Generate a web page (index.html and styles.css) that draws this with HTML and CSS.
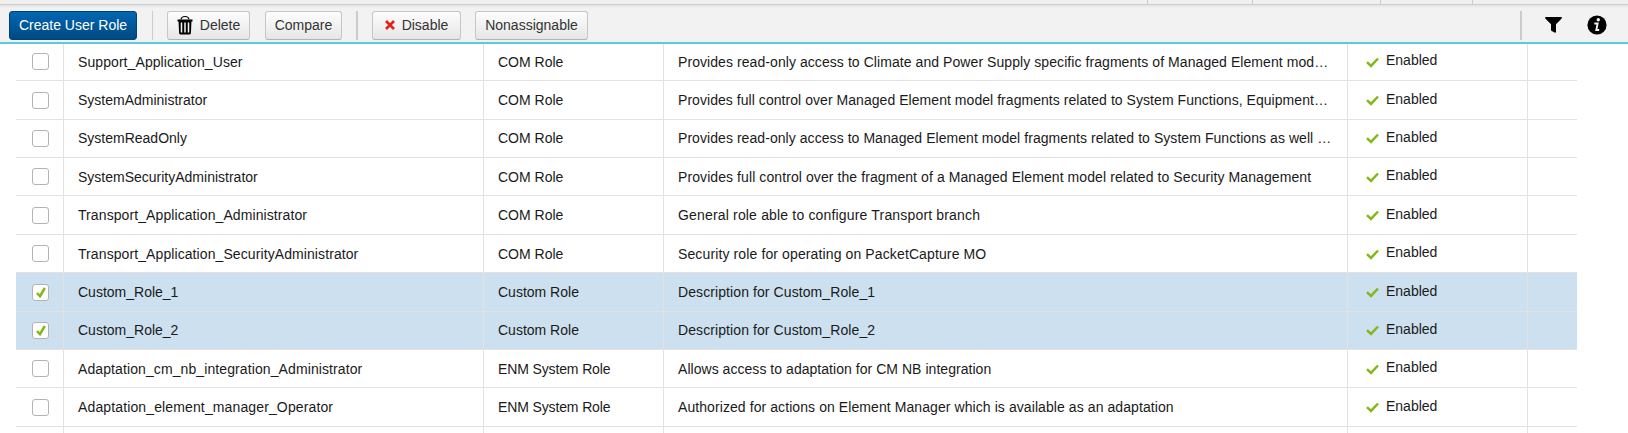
FILE: index.html
```html
<!DOCTYPE html>
<html lang="en">
<head>
<meta charset="utf-8">
<title>Role Management</title>
<link rel="stylesheet" href="styles.css">
</head>
<body>
<svg class="defs" width="0" height="0">
  <symbol id="tick" viewBox="0 0 13 11"><path d="M1 5.200 5 8.900 12 1.500" fill="none" stroke="#83b81a" stroke-width="2.500"/></symbol>
</svg>
<div class="strip"><i class="s1"></i><i class="s2"></i><i class="s3"></i><i class="s4"></i></div>
<header class="bar">
  <button class="btn primary">Create User Role</button>
  <span class="sep thin"></span>
  <button class="btn delete"><svg width="16" height="20" viewBox="0 0 16 20"><path d="M4 4.500C4.500 .5 11.500 .5 12 4.500" fill="none" stroke="#000" stroke-width="1.200"/><path d="M.5 4.500h15v2H.5z"/><path d="M1.500 6h13l-.6 12q-.1 1.500-1.600 1.500H3.700q-1.500 0-1.600-1.500z"/><path d="M4.500 7.500v10M8 7.500v10M11.500 7.500v10" stroke="#f5f5f5" stroke-width="1.500"/></svg>Delete</button>
  <button class="btn compare">Compare</button>
  <span class="sep"></span>
  <button class="btn disable"><svg width="10" height="10" viewBox="0 0 10 10"><path d="M1 1l8 8M9 1 1 9" stroke="#e32119" stroke-width="2.600"/></svg>Disable</button>
  <button class="btn nonassign">Nonassignable</button>
  <span class="tools">
    <span class="sep"></span>
    <svg class="filter" width="17" height="16" viewBox="0 0 17 16"><path d="M.3 0h16.400v1.500L11 7.300v8.200H9.300L6 13.500V7.300L.3 1.500z"/></svg>
    <svg class="info" width="20" height="20" viewBox="0 0 20 20"><circle cx="10" cy="10" r="9.600"/><circle cx="11.300" cy="4.700" r="1.700" fill="#f2f2f2"/><path d="M7.300 8.500h3.300L9.300 15h2.900" fill="none" stroke="#f2f2f2" stroke-width="1.900"/></svg>
  </span>
</header>
<main class="view">
  <div class="table" id="roles"></div>
</main>
<script src="roles.js"></script>
</body>
</html>
```
FILE: styles.css
```css
* { box-sizing: border-box; }
body { margin: 0; height: 433px; overflow: hidden; display: flex; flex-direction: column; background: #fff; color: #1a1a1a; font: 14px/18px "Liberation Sans", Arial, sans-serif; }
.defs { position: absolute; }
.strip { height: 5px; flex: none; display: flex; background: #f0f0f0; border-bottom: 1px solid #ccc; }
.strip i { border-right: 1px solid #ccc; }
.s1 { width: 1148px; }
.s2 { width: 105px; }
.s3 { width: 128px; }
.s4 { width: 92px; }
.bar { height: 39px; flex: none; display: flex; align-items: flex-start; padding: 6px 0 0 9px; background: linear-gradient(#e2e2e2, #f2f2f2 3px); border-bottom: 2px solid #5fc8e1; }
.btn { height: 29px; display: flex; align-items: center; justify-content: center; padding: 0 0 1px; border: 1px solid #c6c6c6; border-bottom-color: #b3b3b3; border-radius: 3px; background: linear-gradient(#fdfdfd, #e6e6e6); color: #333; font: inherit; }
.primary { width: 128px; border-color: #00437a; background: linear-gradient(#0066b3, #004a80); color: #fff; }
.delete { width: 83px; margin-left: 14px; gap: 7px; }
.compare { width: 77px; margin-left: 15px; }
.disable { width: 89px; margin-left: 14px; gap: 7px; }
.nonassign { width: 113px; margin-left: 14px; }
.sep { width: 2px; height: 29px; margin-left: 14px; background: #ccc; }
.thin { width: 1px; margin-left: 15px; }
.tools { display: flex; margin-left: auto; padding-right: 21px; }
.filter { margin: 6px 0 0 23px; }
.info { margin: 4px 0 0 25px; }
.view { flex: 1; min-height: 0; overflow: hidden; padding-left: 16px; }
.table { width: 1561px; margin-top: -1.2px; }
.row { display: grid; grid-template-columns: 48px 420px 180px 684px 180px 49px; height: 38.4px; border-bottom: 1px solid #e2e2e2; }
.row.selected { background: #cce0ef; }
.cell { min-width: 0; padding: 9.8px 14px 0; border-right: 1px solid #e2e2e2; white-space: nowrap; }
.cell.check { padding: 10.4px 0 0 16px; }
.cell.last { border-right: 0; }
.cell.status { display: flex; gap: 7.5px; padding: 8.4px 0 0 17.5px; line-height: 18px; }
.status svg { flex: none; margin-top: 5.4px; }
.box { display: flex; align-items: center; justify-content: center; width: 17px; height: 17px; border: 1px solid #b3b3b3; border-radius: 3px; background: #fff; }
```
FILE: roles.js
```js
// name, type, description, tracking of each of the three, selected
const roles = [
  ["Support_Application_User", "COM Role", "Provides read-only access to Climate and Power Supply specific fragments of Managed Element mod…", [.08, 0, .07]],
  ["SystemAdministrator", "COM Role", "Provides full control over Managed Element model fragments related to System Functions, Equipment…", [0, 0, .05]],
  ["SystemReadOnly", "COM Role", "Provides read-only access to Managed Element model fragments related to System Functions as well …", [0, 0, .06]],
  ["SystemSecurityAdministrator", "COM Role", "Provides full control over the fragment of a Managed Element model related to Security Management", [0, 0, .085]],
  ["Transport_Application_Administrator", "COM Role", "General role able to configure Transport branch", [.09, 0, .17]],
  ["Transport_Application_SecurityAdministrator", "COM Role", "Security role for operating on PacketCapture MO", [.09, 0, .12]],
  ["Custom_Role_1", "Custom Role", "Description for Custom_Role_1", [0, 0, .09], true],
  ["Custom_Role_2", "Custom Role", "Description for Custom_Role_2", [0, 0, .09], true],
  ["Adaptation_cm_nb_integration_Administrator", "ENM System Role", "Allows access to adaptation for CM NB integration", [.1, -.13, .04]],
  ["Adaptation_element_manager_Operator", "ENM System Role", "Authorized for actions on Element Manager which is available as an adaptation", [.13, -.13, .08]]
];
const mark = '<svg width="10" height="11" viewBox="0 0 10 11"><path d="M1 6l3 3.200L8.800 1" fill="none" stroke="#83b81a" stroke-width="2.500"/></svg>';
const rows = roles.map(([name, type, text, track, on]) => `
  <div class="row${on ? " selected" : ""}">
    <div class="cell check"><span class="box">${on ? mark : ""}</span></div>
    <div class="cell" style="letter-spacing:${track[0]}px">${name}</div>
    <div class="cell" style="letter-spacing:${track[1]}px">${type}</div>
    <div class="cell" style="letter-spacing:${track[2]}px">${text}</div>
    <div class="cell status"><svg width="13" height="11"><use href="#tick"/></svg>Enabled</div>
    <div class="cell last"></div>
  </div>`);
const blank = '<div class="row"><div class="cell"></div><div class="cell"></div><div class="cell"></div><div class="cell"></div><div class="cell"></div><div class="cell last"></div></div>';
document.getElementById("roles").innerHTML = rows.join("") + blank;
```
